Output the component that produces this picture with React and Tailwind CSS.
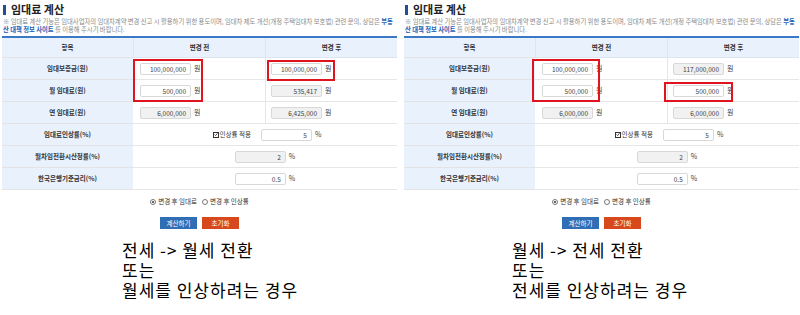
const panels = [
  {
    before: [
      { v: "100,000,000", ro: false },
      { v: "500,000", ro: false },
      { v: "6,000,000", ro: true },
    ],
    after: [
      { v: "100,000,000", ro: false },
      { v: "535,417", ro: true },
      { v: "6,425,000", ro: true },
    ],
    lines: ["전세 -> 월세 전환", "또는", "월세를 인상하려는 경우"],
  },
  {
    before: [
      { v: "100,000,000", ro: false },
      { v: "500,000", ro: false },
      { v: "6,000,000", ro: true },
    ],
    after: [
      { v: "117,000,000", ro: true },
      { v: "500,000", ro: false },
      { v: "6,000,000", ro: true },
    ],
    lines: ["월세 -> 전세 전환", "또는", "전세를 인상하려는 경우"],
  },
];

const labels = ["임대보증금(원)", "월 임대료(원)", "연 임대료(원)"];

function Field({ value, readOnly, unit = "원" }) {
  return (
    <div className="flex items-center">
      <div
        className={`w-[51px] h-[12px] border border-[#d8d8d8] rounded-[2px] text-right pr-[4px] text-[6.5px] leading-[10px] text-[#444] ${
          readOnly ? "bg-[#f1f1f1]" : "bg-white"
        }`}
      >
        {value}
      </div>
      <span className="ml-[3px] text-[7px] text-[#444]">{unit}</span>
    </div>
  );
}

function Label({ children, className = "" }) {
  return (
    <div className={`bg-[#e9f1fc] flex items-center justify-center text-[6.5px] text-[#333] font-semibold border-b border-[#e3e3e3] ${className}`}>
      {children}
    </div>
  );
}

function Panel({ data, textOffset, pad, boxes }) {
  return (
    <div className={`relative w-[400px] ${pad}`}>
      <div className="flex items-center h-[18px] pt-[1px]">
        <span className="w-[3px] h-[10px] bg-[#1f4f97] ml-[1px]"></span>
        <span className="ml-[5px] text-[11px] font-bold text-[#222] leading-none">임대료 계산</span>
      </div>
      <div className="text-[6.3px] leading-[8px] text-[#8a8a8a] pl-[1px] whitespace-nowrap">
        <div>
          ※ 임대료 계산 기능은 임대사업자의 임대차계약 변경 신고 시 활용하기 위한 용도이며, 임대차 제도 개선(개정 주택임대차 보호법) 관련 문의, 상담은{" "}
          <b className="text-[#1d5cb4]">부동</b>
        </div>
        <div>
          <b className="text-[#1d5cb4]">산 대책 정보 사이트</b> 를 이용해 주시기 바랍니다.
        </div>
      </div>

      <div className="mt-[2px] w-[395px] border-t-2 border-[#3b79c4] grid grid-cols-[131px_132px_132px]">
        <Label className="h-[20px] font-bold">항목</Label>
        <div className="h-[20px] bg-[#e9f1fc] border-l border-b border-[#dde5f0] flex items-center justify-center text-[6.5px] font-bold text-[#333]">변경 전</div>
        <div className="h-[20px] bg-[#e9f1fc] border-l border-b border-[#dde5f0] flex items-center justify-center text-[6.5px] font-bold text-[#333]">변경 후</div>

        {labels.map((l, i) => (
          <div key={l} className="contents">
            <Label className="h-[22px]">{l}</Label>
            <div className="h-[22px] border-b border-[#e6e6e6] flex items-center pl-[7px]">
              <Field value={data.before[i].v} readOnly={data.before[i].ro} />
            </div>
            <div className="h-[22px] border-b border-l border-[#e6e6e6] flex items-center pl-[5px]">
              <Field value={data.after[i].v} readOnly={data.after[i].ro} />
            </div>
          </div>
        ))}

        <Label className="h-[22px]">임대료인상률(%)</Label>
        <div className="col-span-2 h-[22px] border-b border-[#e6e6e6] flex items-center justify-center pl-[4px]">
          <span className="w-[6px] h-[6px] border border-[#333] bg-white flex items-center justify-center">
            <svg viewBox="0 0 6 6" className="w-[5px] h-[5px]">
              <path d="M0.8 3 L2.4 4.6 L5.2 1.2" stroke="#222" strokeWidth="1.2" fill="none" />
            </svg>
          </span>
          <span className="ml-[1px] text-[6.5px] text-[#333]">인상률 적용</span>
          <div className="ml-[10px]">
            <Field value="5" unit="%" />
          </div>
        </div>

        <Label className="h-[22px]">월차임전환시산정률(%)</Label>
        <div className="col-span-2 h-[22px] border-b border-[#e6e6e6] flex items-center justify-center">
          <Field value="2" unit="%" readOnly />
        </div>

        <Label className="h-[22px]">한국은행기준금리(%)</Label>
        <div className="col-span-2 h-[22px] border-b border-[#e6e6e6] flex items-center justify-center">
          <Field value="0.5" unit="%" />
        </div>
      </div>

      <div className="w-[395px] mt-[7px] h-[10px] flex items-center justify-center text-[6.5px] text-[#333]">
        <span className="w-[6px] h-[6px] rounded-full border border-[#777] flex items-center justify-center">
          <span className="w-[2px] h-[2px] rounded-full bg-[#333]"></span>
        </span>
        <span className="ml-[2px]">변경 후 임대료</span>
        <span className="ml-[5px] w-[6px] h-[6px] rounded-full border border-[#777]"></span>
        <span className="ml-[2px]">변경 후 인상률</span>
      </div>

      <div className="w-[395px] mt-[10px] flex justify-center gap-[5px]">
        <button className="w-[37px] h-[12px] bg-[#2f6db5] text-white text-[6.5px] leading-[12px]">계산하기</button>
        <button className="w-[37px] h-[12px] bg-[#d8481d] text-white text-[6.5px] leading-[12px]">초기화</button>
      </div>

      <div className={`mt-[11px] text-[17px] leading-[20px] tracking-[1px] text-black ${textOffset}`}>
        {data.lines.map((t) => (
          <div key={t}>{t}</div>
        ))}
      </div>

      {boxes.map((b, i) => (
        <div key={i} className={`absolute border-2 border-[#e0141e] ${b}`}></div>
      ))}
    </div>
  );
}

export default function App() {
  return (
    <div className="w-[800px] h-[315px] bg-white overflow-hidden flex font-['Noto_Sans_CJK_KR','Noto_Sans',sans-serif]">
      <Panel
        data={panels[0]}
        pad="pl-[2px]"
        textOffset="ml-[120px]"
        boxes={["left-[133px] top-[59px] w-[70px] h-[43px]", "left-[267px] top-[60px] w-[68px] h-[21px]"]}
      />
      <Panel
        data={panels[1]}
        pad="pl-[6px] -ml-[2px]"
        textOffset="ml-[108px]"
        boxes={["left-[134px] top-[59px] w-[68px] h-[43px]", "left-[266px] top-[82px] w-[69px] h-[20px]"]}
      />
    </div>
  );
}
